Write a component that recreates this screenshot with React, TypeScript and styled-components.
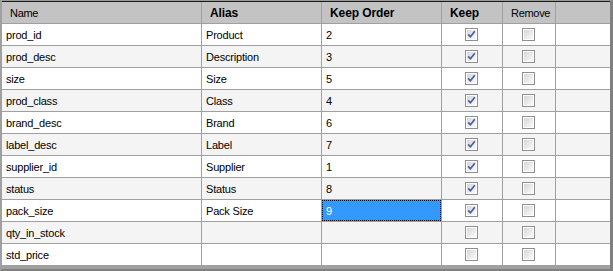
import React from "react";
import styled, { createGlobalStyle, css } from "styled-components";

const Global = createGlobalStyle`
  html, body { margin: 0; padding: 0; background: #ffffff; }
  body { font-family: "Liberation Sans", Arial, sans-serif; }
`;

const Frame = styled.div`
  width: 613px;
  height: 271px;
  box-sizing: border-box;
  border-top: 1px solid #9a9a9a;
  border-left: 2px solid #a0a0a0;
  border-right: 3px solid #7f7f7f;
  border-bottom: 2px solid #808080;
  background: #a0a0a0;
  overflow: hidden;
`;

const TopEdge = styled.div`
  height: 1px;
  background: #1a1a1a;
`;

const Grid = styled.div`
  display: grid;
  grid-template-columns: 199px 119px 119px 60px 52px 54px;
  grid-auto-rows: 21px;
  column-gap: 1px;
  row-gap: 1px;
  background: #a0a0a0;
  padding-bottom: 1px;
`;

const HeaderCell = styled.div<{ $bold?: boolean }>`
  background: #c3c3c3;
  display: flex;
  align-items: center;
  padding-left: 8px;
  font-size: ${(p) => (p.$bold ? "12px" : "11px")};
  letter-spacing: ${(p) => (p.$bold ? "-0.1px" : "-0.3px")};
  font-weight: ${(p) => (p.$bold ? 700 : 400)};
  color: #000;
  white-space: nowrap;
  overflow: hidden;
`;

const Cell = styled.div<{ $alt?: boolean; $selected?: boolean; $center?: boolean }>`
  background: ${(p) => (p.$alt ? "#f4f4f4" : "#ffffff")};
  display: flex;
  align-items: center;
  padding-left: 4px;
  font-size: 11px;
  letter-spacing: -0.2px;
  color: #000;
  white-space: nowrap;
  overflow: hidden;
  box-sizing: border-box;
  ${(p) =>
    p.$center &&
    css`
      justify-content: center;
      padding-left: 0;
      padding-right: 1px;
    `}
  ${(p) =>
    p.$selected &&
    css`
      background: #3399ff;
      color: #ffffff;
      outline: 1px dotted #000;
      outline-offset: -1px;
    `}
`;

const Box = styled.span`
  width: 13px;
  height: 13px;
  box-sizing: border-box;
  border: 1px solid #8e8f8f;
  background: #fff;
  padding: 1px;
  display: inline-flex;
`;

const BoxInner = styled.span`
  flex: 1;
  background: linear-gradient(135deg, #d6d6d6 0%, #ececec 60%, #fafafa 100%);
  display: flex;
  align-items: center;
  justify-content: center;
`;

const Check: React.FC<{ checked?: boolean }> = ({ checked }) => (
  <Box>
    <BoxInner>
      {checked && (
        <svg width="9" height="9" viewBox="0 0 9 9">
          <path d="M1.2 4.4 L3.4 6.8 L7.8 1.2" stroke="#4a5e9c" strokeWidth="1.7" fill="none" />
        </svg>
      )}
    </BoxInner>
  </Box>
);

type Row = { name: string; alias: string; order: string; keep: boolean };

const rows: Row[] = [
  { name: "prod_id", alias: "Product", order: "2", keep: true },
  { name: "prod_desc", alias: "Description", order: "3", keep: true },
  { name: "size", alias: "Size", order: "5", keep: true },
  { name: "prod_class", alias: "Class", order: "4", keep: true },
  { name: "brand_desc", alias: "Brand", order: "6", keep: true },
  { name: "label_desc", alias: "Label", order: "7", keep: true },
  { name: "supplier_id", alias: "Supplier", order: "1", keep: true },
  { name: "status", alias: "Status", order: "8", keep: true },
  { name: "pack_size", alias: "Pack Size", order: "9", keep: true },
  { name: "qty_in_stock", alias: "", order: "", keep: false },
  { name: "std_price", alias: "", order: "", keep: false },
];

export default function App() {
  return (
    <>
      <Global />
      <Frame>
        <TopEdge />
        <Grid>
          <HeaderCell>Name</HeaderCell>
          <HeaderCell $bold>Alias</HeaderCell>
          <HeaderCell $bold>Keep Order</HeaderCell>
          <HeaderCell $bold>Keep</HeaderCell>
          <HeaderCell>Remove</HeaderCell>
          <HeaderCell />
          {rows.map((r, i) => {
            const alt = i % 2 === 1;
            return (
              <React.Fragment key={r.name}>
                <Cell $alt={alt}>{r.name}</Cell>
                <Cell $alt={alt}>{r.alias}</Cell>
                <Cell $alt={alt} $selected={r.name === "pack_size"}>
                  {r.order}
                </Cell>
                <Cell $alt={alt} $center>
                  <Check checked={r.keep} />
                </Cell>
                <Cell $alt={alt} $center>
                  <Check />
                </Cell>
                <Cell $alt={alt} />
              </React.Fragment>
            );
          })}
        </Grid>
      </Frame>
    </>
  );
}
